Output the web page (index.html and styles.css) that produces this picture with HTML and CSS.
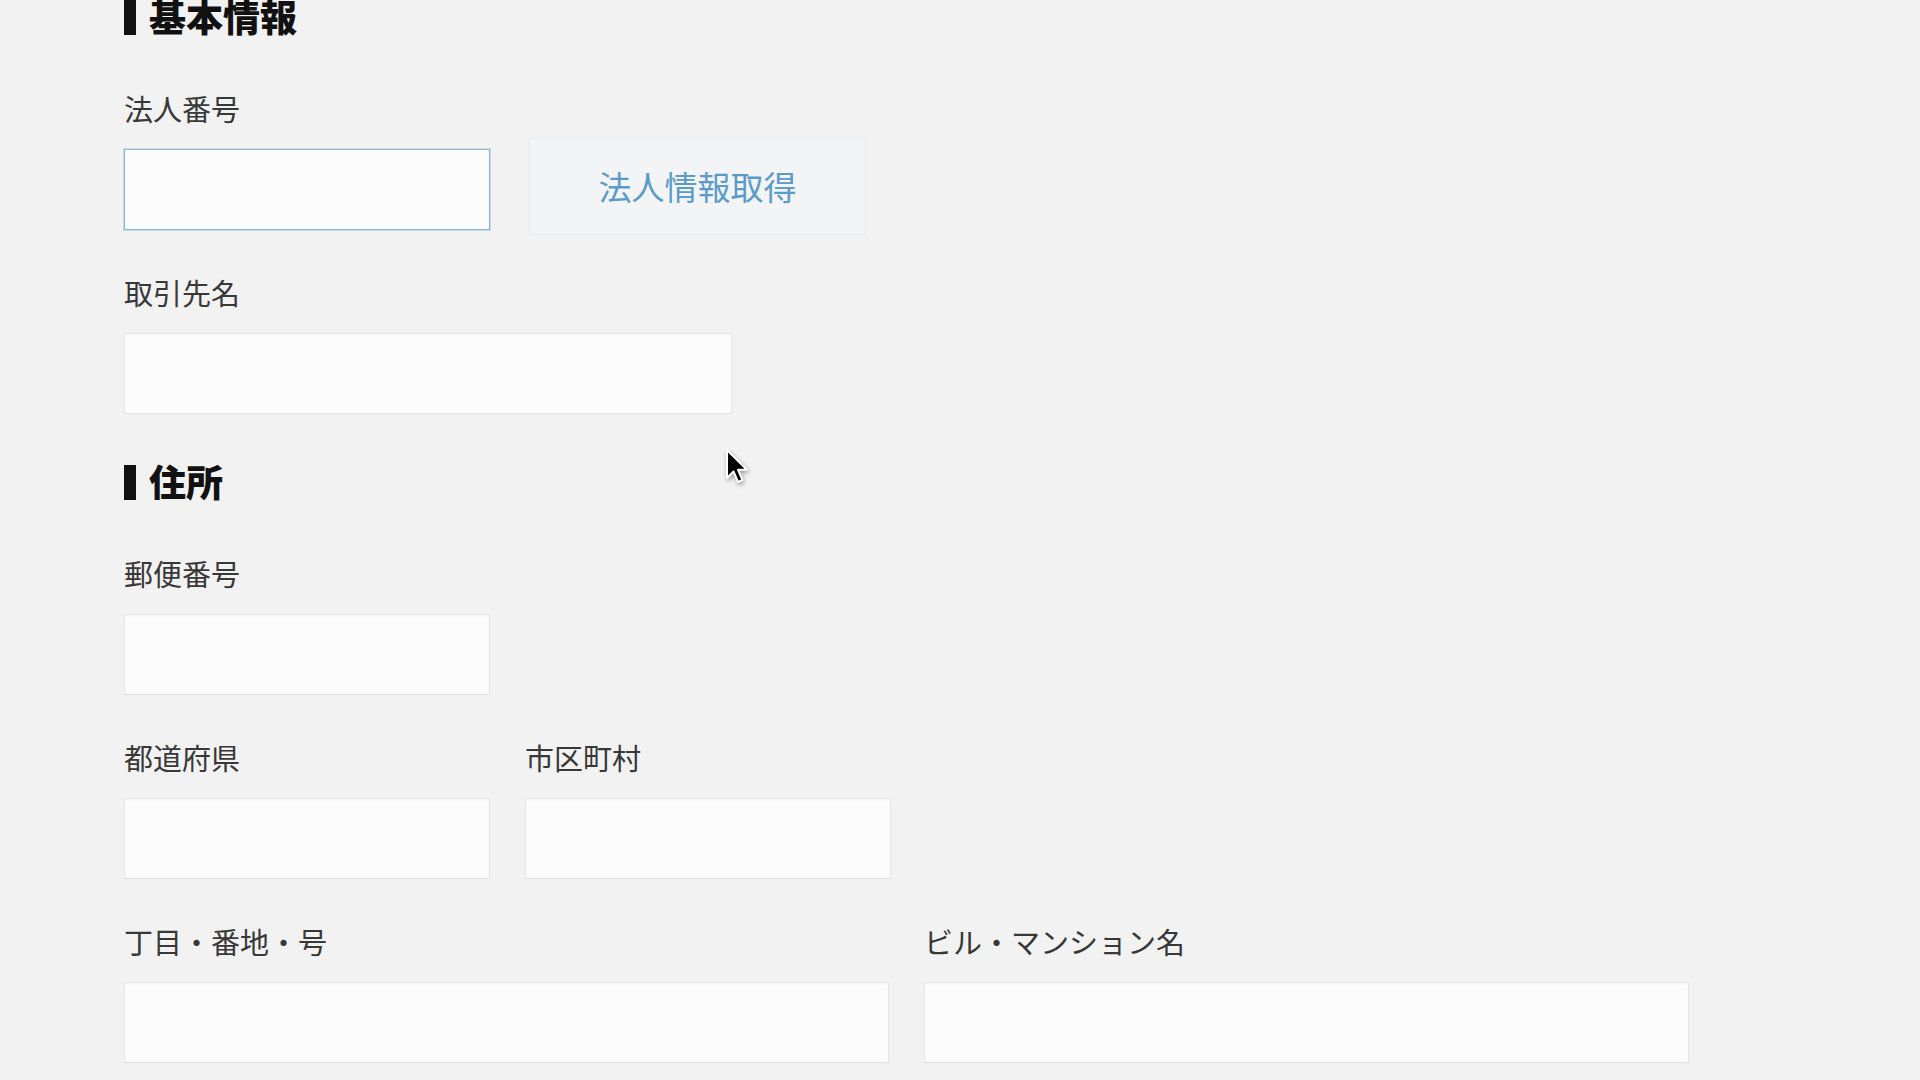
FILE: index.html
```html
<!DOCTYPE html>
<html lang="ja">
<head>
    <meta charset="UTF-8">
    <meta name="viewport" content="width=device-width, initial-scale=1.0">
    <title>取引先登録</title>
    <link rel="stylesheet" href="styles.css">
</head>
<body>
    <div class="page">
        <!-- 基本情報 -->
        <h2 class="section-title">基本情報</h2>

        <div class="field">
            <label for="houjinNo">法人番号</label>
            <div class="field-row">
                <input type="text" id="houjinNo" class="input input-focus">
                <button type="button" class="fetch-btn">法人情報取得</button>
            </div>
        </div>

        <div class="field">
            <label for="torihikisaki">取引先名</label>
            <input type="text" id="torihikisaki" class="input input-name">
        </div>

        <!-- 住所 -->
        <h2 class="section-title section-next">住所</h2>

        <div class="field">
            <label for="zip">郵便番号</label>
            <input type="text" id="zip" class="input">
        </div>

        <div class="field-cols">
            <div class="field">
                <label for="pref">都道府県</label>
                <input type="text" id="pref" class="input">
            </div>
            <div class="field">
                <label for="city">市区町村</label>
                <input type="text" id="city" class="input">
            </div>
        </div>

        <div class="field-cols">
            <div class="field">
                <label for="street">丁目・番地・号</label>
                <input type="text" id="street" class="input input-wide">
            </div>
            <div class="field">
                <label for="building">ビル・マンション名</label>
                <input type="text" id="building" class="input input-wide">
            </div>
        </div>
    </div>

    <!-- マウスカーソル -->
    <svg class="cursor" width="24" height="38" viewBox="0 0 24 38">
        <path d="M2 2 L2 30 L8.5 23.5 L13 34 L17.5 32 L13 21.8 L22 21.8 Z" fill="#000" stroke="#fff" stroke-width="2" stroke-linejoin="round"/>
    </svg>
</body>
</html>
```

FILE: styles.css
```css
html, body {
    margin: 0;
    padding: 0;
}
body {
    background-color: #f2f2f2;
    font-family: "Noto Sans CJK JP", "Noto Sans", sans-serif;
    color: #333;
    height: 1080px;
    overflow: hidden;
    position: relative;
}
.page {
    padding-left: 124px;
}
.section-title {
    display: flex;
    align-items: flex-start;
    margin: -4px 0 52px 0;
    font-size: 37px;
    line-height: 40px;
    font-weight: 900;
    color: #111;
}
.section-title::before {
    content: "";
    width: 12px;
    height: 35px;
    margin-top: 4px;
    margin-right: 13px;
    background-color: #111;
}
.section-next {
    margin-top: 47px;
}
.field {
    margin-bottom: 42px;
}
.field label {
    display: block;
    font-size: 29px;
    line-height: 40px;
    margin-bottom: 21px;
    color: #383838;
}
.field-row {
    display: flex;
    align-items: flex-start;
    gap: 39px;
}
.field-cols {
    display: flex;
    gap: 35px;
}
.input {
    box-sizing: border-box;
    display: block;
    width: 366px;
    height: 81px;
    margin: 0;
    padding: 0 16px;
    background-color: #fcfcfc;
    border: 1px solid #e6e6e6;
    border-bottom-color: #e0e0e0;
    border-radius: 0;
    box-shadow: inset 0 1px 2px rgba(0, 0, 0, 0.03);
    font-size: 28px;
    outline: none;
}
.input-focus {
    border: 1px solid #82b4da;
    border-top-color: #9fb7c9;
    box-shadow: 0 0 0 1px rgba(130, 180, 218, 0.35);
}
.input-name {
    width: 608px;
}
.input-wide {
    width: 765px;
}
.fetch-btn {
    box-sizing: border-box;
    width: 337px;
    height: 98px;
    margin-top: -12px;
    margin-bottom: -5px;
    background-color: #f3f4f6;
    border: 1px solid #e7e8ea;
    border-radius: 0;
    font-family: "Noto Sans CJK JP", "Noto Sans", sans-serif;
    font-size: 33px;
    color: #5b9bc8;
    cursor: pointer;
}
.cursor {
    position: absolute;
    left: 725px;
    top: 448px;
    filter: drop-shadow(1px 2px 2px rgba(0, 0, 0, 0.35));
}
```
